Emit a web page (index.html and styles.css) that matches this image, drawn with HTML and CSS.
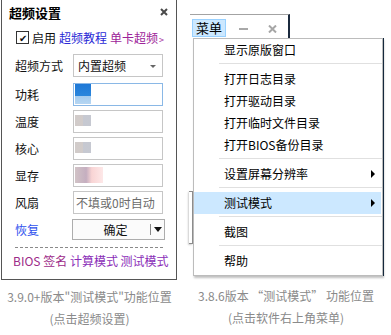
FILE: index.html
```html
<!DOCTYPE html>
<html lang="zh-CN">
<head>
    <meta charset="UTF-8">
    <title>超频设置</title>
    <link rel="stylesheet" href="styles.css">
</head>
<body>

<div class="left-col">
    <div class="panel">
        <div class="panel-title">
            <span>超频设置</span>
            <svg class="close" width="8" height="8" viewBox="0 0 8 8"><path d="M1 1L7 7M7 1L1 7" stroke="#4a4a4a" stroke-width="2"/></svg>
        </div>
        <div class="check-row">
            <span class="checkbox">✔</span>
            <span>启用</span>
            <span class="link-blue">超频教程</span>
            <span class="link-purple">单卡超频<small>&gt;</small></span>
        </div>

        <div class="form">
            <div class="row row-first">
                <span class="label">超频方式</span>
                <div class="field select">内置超频<span class="caret"></span></div>
            </div>
            <div class="row">
                <span class="label">功耗</span>
                <div class="field focused"><span class="blur blur-blue"></span></div>
            </div>
            <div class="row">
                <span class="label">温度</span>
                <div class="field"><span class="blur blur-gray"></span></div>
            </div>
            <div class="row">
                <span class="label">核心</span>
                <div class="field"><span class="blur blur-gray"></span></div>
            </div>
            <div class="row">
                <span class="label">显存</span>
                <div class="field"><span class="blur blur-pink"></span></div>
            </div>
            <div class="row">
                <span class="label">风扇</span>
                <div class="field placeholder">不填或0时自动</div>
            </div>
            <div class="row row-btn">
                <span class="label link-restore">恢复</span>
                <div class="ok-btn">
                    <span class="ok-text">确定</span>
                    <span class="ok-drop"><span class="tri-down"></span></span>
                </div>
            </div>
        </div>

        <div class="dashed"></div>
        <div class="footer-links">
            <span class="f1">BIOS</span> <span class="f1">签名</span> <span class="f2">计算模式</span> <span class="f2">测试模式</span>
        </div>
    </div>
    <div class="caption">
        <div>3.9.0+版本"测试模式"功能位置</div>
        <div>(点击超频设置)</div>
    </div>
</div>

<div class="right-col">
    <div class="winbar">
        <span class="menu-btn">菜单</span>
        <span class="win-min"></span>
        <svg class="win-close" width="9" height="8" viewBox="0 0 9 8"><path d="M1 0.5L8 7.5M8 0.5L1 7.5" stroke="#a6a6a6" stroke-width="2"/></svg>
    </div>
    <div class="menu">
        <div class="ghost"></div>
        <div class="item">显示原版窗口</div>
        <div class="sep"></div>
        <div class="item">打开日志目录</div>
        <div class="item">打开驱动目录</div>
        <div class="item">打开临时文件目录</div>
        <div class="item">打开BIOS备份目录</div>
        <div class="sep"></div>
        <div class="item">设置屏幕分辨率<span class="tri-right"></span></div>
        <div class="sep"></div>
        <div class="item active">测试模式<span class="tri-right"></span></div>
        <div class="sep"></div>
        <div class="item">截图</div>
        <div class="sep"></div>
        <div class="item">帮助</div>
    </div>
    <div class="caption">
        <div>3.8.6版本 “测试模式” 功能位置</div>
        <div>(点击软件右上角菜单)</div>
    </div>
</div>

</body>
</html>
```

FILE: styles.css
```css
body {
    margin: 0;
    background: #ffffff;
    font-family: "Noto Sans CJK SC", "Noto Sans", sans-serif;
    font-size: 12px;
    color: #111;
    display: flex;
}
.left-col {
    width: 177px;
    margin-left: 1px;
}
.panel {
    width: 176px;
    height: 280px;
    box-sizing: border-box;
    border: 1px solid #555;
    border-top: 0;
}
.panel-title {
    height: 24px;
    display: flex;
    align-items: center;
    justify-content: space-between;
    padding: 0 8px 0 7px;
    font-size: 13px;
    font-weight: bold;
    color: #000;
}
.close {
    margin-top: -1px;
}
.check-row {
    height: 26px;
    display: flex;
    align-items: center;
    padding-left: 14px;
    gap: 3px;
    white-space: nowrap;
}
.checkbox {
    width: 11px;
    height: 11px;
    border: 1px solid #333;
    font-size: 10px;
    line-height: 11px;
    text-align: center;
    color: #111;
}
.link-blue {
    color: #2a2ad6;
}
.link-purple {
    color: #9d2399;
}
.link-purple small {
    font-size: 9px;
    margin-left: 1px;
}
.form {
    padding: 4px 0 0 13px;
}
.row {
    display: flex;
    align-items: center;
    height: 23px;
    margin-bottom: 4px;
}
.row-first {
    margin-bottom: 6px;
}
.row-btn {
    margin-top: 5px;
    height: 20px;
}
.label {
    width: 58px;
}
.link-restore {
    color: #3052ee;
}
.field {
    position: relative;
    width: 90px;
    height: 23px;
    box-sizing: border-box;
    border: 1px solid #c6c6c6;
    background: #fff;
    padding-left: 4px;
    line-height: 21px;
    overflow: hidden;
}
.select {
    color: #111;
}
.caret {
    position: absolute;
    right: 6px;
    top: 10px;
    border-left: 3px solid transparent;
    border-right: 3px solid transparent;
    border-top: 3px solid #666;
}
.focused {
    border-color: #8ab8e6;
}
.placeholder {
    color: #6c6c6c;
    padding-left: 2px;
}
.blur {
    display: block;
    position: absolute;
    left: 1px;
    width: 16px;
}
.blur-blue {
    top: 0;
    height: 20px;
    background: linear-gradient(#1e78d6 0, #2a86dc 60%, #a4cbee 60%, #b6d6f2 100%);
}
.blur-gray {
    top: 4px;
    height: 11px;
    background: linear-gradient(90deg, #c9c2c0 50%, #bcbfc9 50%);
    opacity: 0.85;
}
.blur-pink {
    top: 2px;
    width: 28px;
    height: 16px;
    background: linear-gradient(90deg, #c6b4b8 0, #b69ab0 40%, #f7caca 60%, #fde2e2 100%);
    opacity: 0.8;
}
.ok-btn {
    width: 93px;
    height: 21px;
    box-sizing: border-box;
    border: 1px solid #adadad;
    background: #fbfbfb;
    margin-left: -1px;
    display: flex;
    align-items: center;
}
.ok-text {
    flex: 1;
    text-align: center;
    padding-left: 8px;
}
.ok-drop {
    width: 13px;
    height: 11px;
    border-left: 1px solid #888;
    display: flex;
    align-items: center;
    justify-content: center;
}
.tri-down {
    border-left: 4px solid transparent;
    border-right: 4px solid transparent;
    border-top: 5px solid #111;
}
.dashed {
    margin: 8px 13px 0 13px;
    border-top: 1px dashed #8a8a8a;
}
.footer-links {
    padding-left: 11px;
    margin-top: 4px;
    white-space: nowrap;
    line-height: 18px;
}
.f1 {
    color: #9c2a88;
}
.f2 {
    color: #8a2db8;
}
.caption {
    text-align: center;
    color: #8a8a8a;
    font-size: 12px;
    line-height: 22px;
    margin-top: 6px;
    white-space: nowrap;
}
.right-col {
    margin-left: 12px;
    width: 198px;
    padding-top: 14px;
}
.winbar {
    width: 100px;
    height: 24px;
    box-sizing: border-box;
    border-top: 1px solid #a3a3a3;
    border-right: 2px solid #1b2a3e;
    display: flex;
    align-items: flex-start;
    padding-left: 2px;
}
.menu-btn {
    margin-top: 4px;
    height: 18px;
    box-sizing: border-box;
    padding: 0 3px;
    border: 1px solid #99d1ff;
    background: #cce8ff;
    font-size: 13px;
    line-height: 16px;
    color: #000;
}
.win-min {
    width: 9px;
    height: 2px;
    background: #a8a8a8;
    margin: 13px 0 0 13px;
}
.win-close {
    margin: 10px 0 0 20px;
}
.menu {
    position: relative;
    width: 190px;
    margin-left: 3px;
    box-sizing: border-box;
    border: 1px solid #bcbcbc;
    background: #fff;
    padding-bottom: 3px;
    box-shadow: 1px 0 0 #14283c, 1px 2px 2px rgba(0, 0, 0, 0.25);
}
.ghost {
    position: absolute;
    left: -5px;
    top: 152px;
    width: 3px;
    height: 51px;
    border: 1px solid #8c8c8c;
    border-left: 0;
    box-shadow: -1px 1px 2px rgba(0, 0, 0, 0.2);
}
.item {
    position: relative;
    height: 22px;
    line-height: 22px;
    padding-left: 30px;
    margin-right: 1px;
    color: #000;
}
.item.active {
    background: #cce8ff;
}
.tri-right {
    position: absolute;
    right: 6px;
    top: 7px;
    border-top: 4px solid transparent;
    border-bottom: 4px solid transparent;
    border-left: 4px solid #000;
}
.sep {
    height: 1px;
    margin: 2px 0 4px 25px;
    background: #e0e0e0;
}
.right-col .caption {
    margin-top: 9px;
    padding-right: 6px;
}
```
